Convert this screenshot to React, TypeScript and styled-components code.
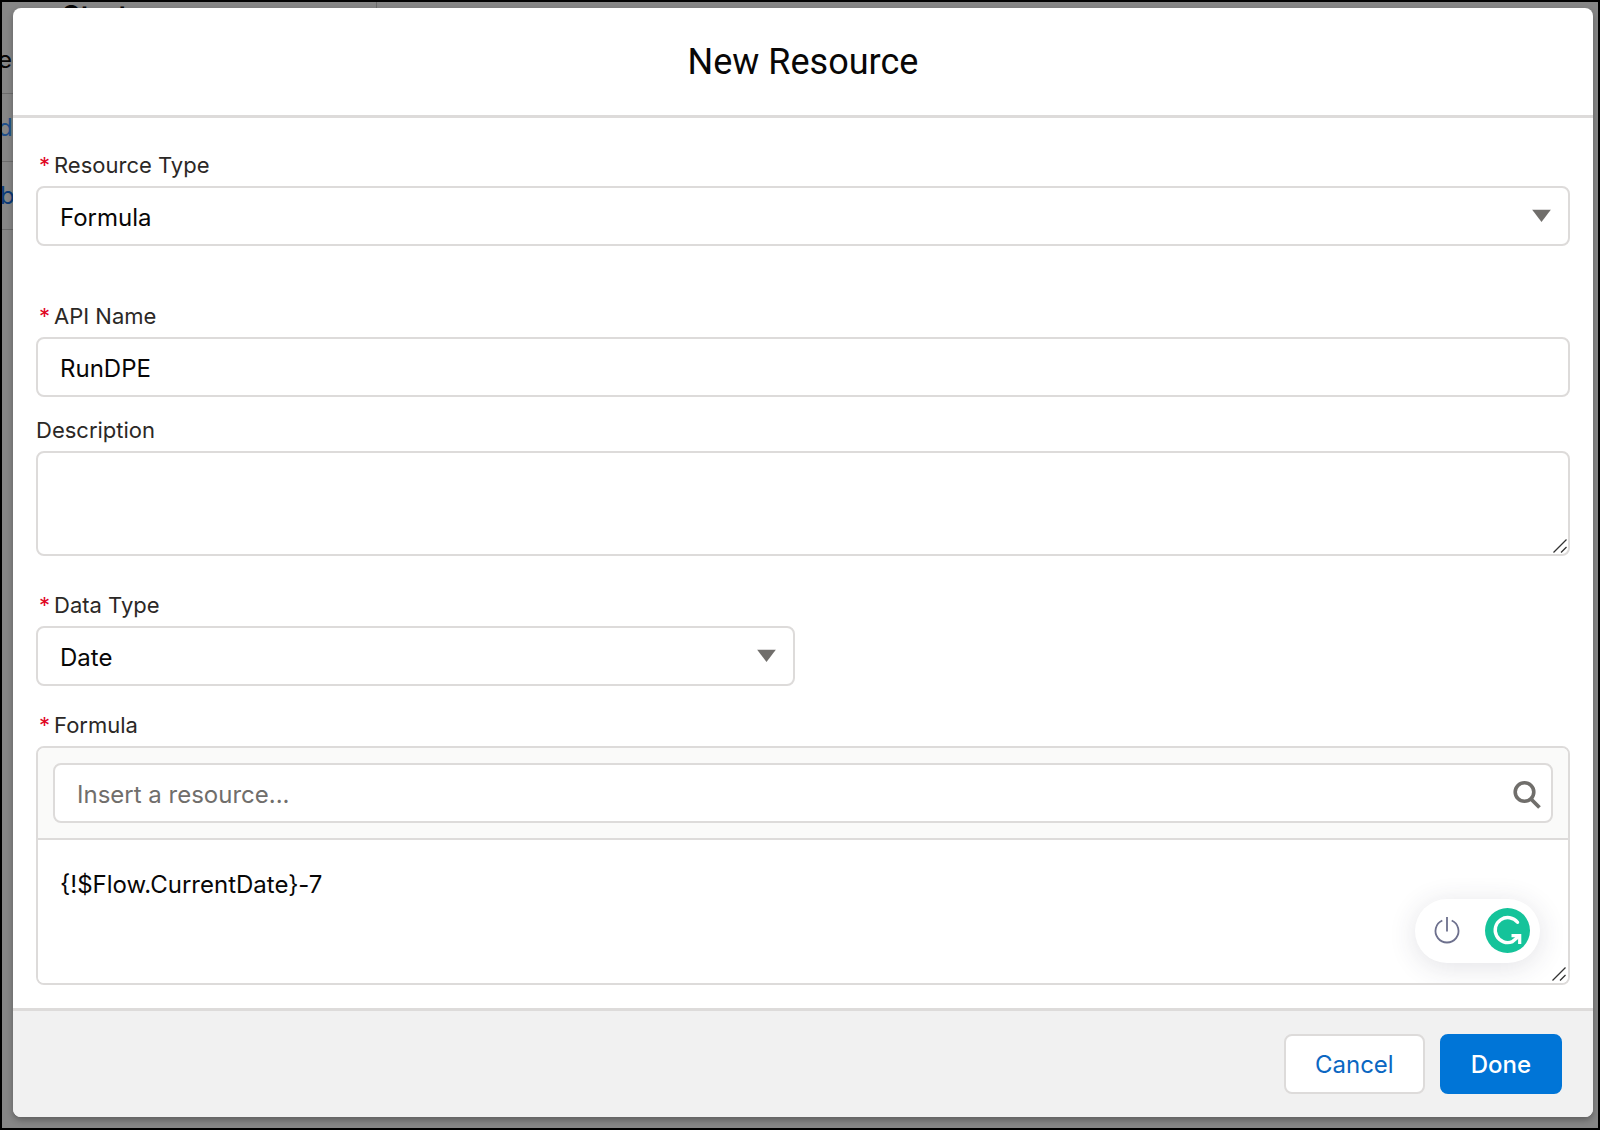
import React, { useState } from "react";
import styled, { createGlobalStyle, css } from "styled-components";

const GlobalStyle = createGlobalStyle`
  *, *::before, *::after { box-sizing: border-box; }
  body {
    margin: 0;
    font-family: Inter, Roboto, "Liberation Sans", sans-serif;
    color: #080707;
  }
  input, select, textarea, button { font-family: inherit; margin: 0; }
`;

const line = "#dddbda";

const Screen = styled.div`
  position: relative;
  min-height: 100vh;
  display: flex;
  flex-direction: column;
  padding: 6px 5px 11px 11px;
  border: 2px solid #000;
  background: #868686;
  overflow: hidden;
`;

const Backdrop = styled.div`
  position: absolute;
  inset: 0;
  overflow: hidden;
`;

const BackHeading = styled.div`
  position: absolute;
  top: -2px;
  left: 60px;
  font-size: 28px;
  line-height: 32px;
  font-weight: 600;
`;

const BackDivider = styled.div`
  position: absolute;
  top: 0;
  left: 374px;
  width: 1px;
  height: 228px;
  background: #6c6c6c;
`;

const BackList = styled.ul`
  position: absolute;
  top: 24px;
  left: -4px;
  width: 378px;
  margin: 0;
  padding: 0;
  list-style: none;
`;

const BackRow = styled.li<{ $color: string; $indent?: number }>`
  height: 68px;
  padding-top: 16px;
  padding-left: ${(p) => p.$indent ?? 0}px;
  border-bottom: 1px solid #6c6c6c;
  font-size: 24px;
  line-height: 36px;
  color: ${(p) => p.$color};
`;

const Modal = styled.section`
  position: relative;
  flex: 1;
  display: flex;
  flex-direction: column;
  border-radius: 8px;
  background: #fff;
  box-shadow: 0 3px 6px rgba(0, 0, 0, 0.3);
`;

const Header = styled.header`
  padding: 32px 24px 31px;
  border-bottom: 3px solid ${line};
  text-align: center;
`;

const Title = styled.h1`
  margin: 0;
  font-family: Roboto, Inter, sans-serif;
  font-size: 36px;
  line-height: 44px;
  font-weight: 400;
`;

const Body = styled.form`
  flex: 1;
  display: flex;
  flex-direction: column;
  padding: 33px 23px 23px;
`;

const Field = styled.div<{ $after?: number; $half?: boolean }>`
  display: flex;
  flex-direction: column;
  gap: 7px;
  width: ${(p) => (p.$half ? "calc(50% - 8px)" : "100%")};
  margin-bottom: ${(p) => p.$after ?? 0}px;
`;

const Label = styled.label`
  font-size: 22px;
  line-height: 28px;
  color: #2b2826;
`;

const Required = styled.abbr`
  margin: 0 4px 0 3px;
  color: #e0061f;
  text-decoration: none;
`;

const boxed = css`
  width: 100%;
  border: 2px solid ${line};
  border-radius: 8px;
  background: #fff;
  color: #080707;
  font-size: 24px;
  outline: none;
`;

const TextInput = styled.input`
  ${boxed}
  height: 60px;
  padding: 2px 22px 0;
  &::placeholder { color: #706e6b; opacity: 1; }
`;

const Select = styled.select`
  ${boxed}
  height: 60px;
  padding: 2px 22px 0;
  appearance: none;
`;

const Control = styled.div`
  position: relative;
  display: flex;
`;

const ControlIcon = styled.svg<{ $right: number }>`
  position: absolute;
  top: 50%;
  right: ${(p) => p.$right}px;
  transform: translateY(-50%);
  pointer-events: none;
`;

const TextArea = styled.textarea`
  ${boxed}
  display: block;
  height: 105px;
  padding: 16px 22px;
  line-height: 36px;
  resize: none;
`;

const Editor = styled.div`
  border: 2px solid ${line};
  border-radius: 8px;
  overflow: hidden;
`;

const EditorBar = styled.div`
  padding: 15px;
  border-bottom: 2px solid ${line};
  background: #fafaf9;
`;

const EditorArea = styled(TextArea)`
  height: 143px;
  padding: 27px 22px;
  border: 0;
  border-radius: 0;
`;

const Grip = styled.svg<{ $inset: number }>`
  position: absolute;
  right: ${(p) => p.$inset}px;
  bottom: ${(p) => p.$inset}px;
  pointer-events: none;
`;

const Assistant = styled.div`
  position: absolute;
  right: 28px;
  bottom: 20px;
  display: flex;
  align-items: center;
  gap: 24px;
  height: 64px;
  padding: 0 10px 1px 18px;
  border-radius: 32px;
  background: #fff;
  box-shadow: 0 4px 28px rgba(50, 50, 80, 0.14);
`;

const IconButton = styled.button`
  display: flex;
  padding: 0;
  border: 0;
  background: none;
`;

const Footer = styled.footer`
  display: flex;
  justify-content: flex-end;
  gap: 15px;
  padding: 23px 31px;
  border-top: 3px solid ${line};
  border-radius: 0 0 8px 8px;
  background: #f1f1f1;
`;

const Button = styled.button<{ $brand?: boolean }>`
  height: 60px;
  padding: 0 29px;
  border: 2px solid ${(p) => (p.$brand ? "#0075d7" : line)};
  border-radius: 8px;
  background: ${(p) => (p.$brand ? "#0075d7" : "#fff")};
  color: ${(p) => (p.$brand ? "#fff" : "#0b67c2")};
  font-size: 24px;
  font-weight: ${(p) => (p.$brand ? 500 : 400)};
`;

const Arrow = () => (
  <ControlIcon $right={19} width="19" height="13" viewBox="0 0 19 13" aria-hidden="true">
    <path d="M0 0h19L9.500 12.500z" fill="#706e6b" />
  </ControlIcon>
);

const ResizeGrip = ({ inset }: { inset: number }) => (
  <Grip $inset={inset} width="14" height="14" viewBox="0 0 14 14" aria-hidden="true">
    <path d="M.5 13.500 13.500 .5M8 13.500 13.500 8" stroke="#333" strokeWidth="1.300" fill="none" />
  </Grip>
);

const Star = () => <Required title="required">*</Required>;

export default function App() {
  const [resourceType, setResourceType] = useState("Formula");
  const [apiName, setApiName] = useState("RunDPE");
  const [description, setDescription] = useState("");
  const [dataType, setDataType] = useState("Date");
  const [formula, setFormula] = useState("{!$Flow.CurrentDate}-7");

  return (
    <>
      <GlobalStyle />
      <Screen>
        <Backdrop aria-hidden="true">
          <BackHeading>Start</BackHeading>
          <BackDivider />
          <BackList>
            <BackRow $color="#080707">ed</BackRow>
            <BackRow $color="#1f4f8a">d</BackRow>
            <BackRow $color="#0b3a78" $indent={2}>b</BackRow>
          </BackList>
        </Backdrop>
        <Modal role="dialog" aria-labelledby="dialog-title">
          <Header>
            <Title id="dialog-title">New Resource</Title>
          </Header>
          <Body id="resource-form" onSubmit={(e) => e.preventDefault()}>
            <Field $after={56}>
              <Label htmlFor="resource-type"><Star />Resource Type</Label>
              <Control>
                <Select id="resource-type" value={resourceType} onChange={(e) => setResourceType(e.target.value)}>
                  <option>Formula</option>
                </Select>
                <Arrow />
              </Control>
            </Field>
            <Field $after={19}>
              <Label htmlFor="api-name"><Star />API Name</Label>
              <TextInput id="api-name" value={apiName} onChange={(e) => setApiName(e.target.value)} />
            </Field>
            <Field $after={35}>
              <Label htmlFor="description">Description</Label>
              <Control>
                <TextArea id="description" value={description} onChange={(e) => setDescription(e.target.value)} />
                <ResizeGrip inset={3} />
              </Control>
            </Field>
            <Field $after={25} $half>
              <Label htmlFor="data-type"><Star />Data Type</Label>
              <Control>
                <Select id="data-type" value={dataType} onChange={(e) => setDataType(e.target.value)}>
                  <option>Date</option>
                </Select>
                <Arrow />
              </Control>
            </Field>
            <Field>
              <Label htmlFor="formula"><Star />Formula</Label>
              <Editor>
                <EditorBar>
                  <Control>
                    <TextInput aria-label="Insert a resource" placeholder="Insert a resource..." />
                    <ControlIcon $right={12} width="28" height="32" viewBox="0 -4 28 32" aria-hidden="true">
                      <circle cx="11.500" cy="11" r="9.300" fill="none" stroke="#706e6b" strokeWidth="3.600" />
                      <path d="M17.500 17.500l9 9" stroke="#706e6b" strokeWidth="3.800" />
                    </ControlIcon>
                  </Control>
                </EditorBar>
                <Control>
                  <EditorArea id="formula" value={formula} onChange={(e) => setFormula(e.target.value)} />
                  <Assistant>
                    <IconButton type="button" aria-label="Turn off">
                      <svg width="28" height="28" viewBox="0 0 28 28" fill="none" stroke="#6d708d" strokeWidth="1.800">
                        <path d="M14 0v14.500M9.300 3.500A11.500 11.500 0 1 0 18.700 3.500" />
                      </svg>
                    </IconButton>
                    <IconButton type="button" aria-label="Open writing assistant">
                      <svg width="45" height="45" viewBox="0 0 45 45" fill="none" stroke="#fff">
                        <circle cx="22.500" cy="22.500" r="22.500" fill="#15c39a" stroke="none" />
                        <path d="M32.500 14.300A12.500 12.500 0 1 0 27.500 33.600L33.500 28.500" strokeWidth="3.400" strokeLinecap="round" />
                        <path d="M26.500 27.700H34.700V36" strokeWidth="3.200" />
                      </svg>
                    </IconButton>
                  </Assistant>
                  <ResizeGrip inset={2} />
                </Control>
              </Editor>
            </Field>
          </Body>
          <Footer>
            <Button type="button">Cancel</Button>
            <Button type="submit" form="resource-form" $brand>Done</Button>
          </Footer>
        </Modal>
      </Screen>
    </>
  );
}
